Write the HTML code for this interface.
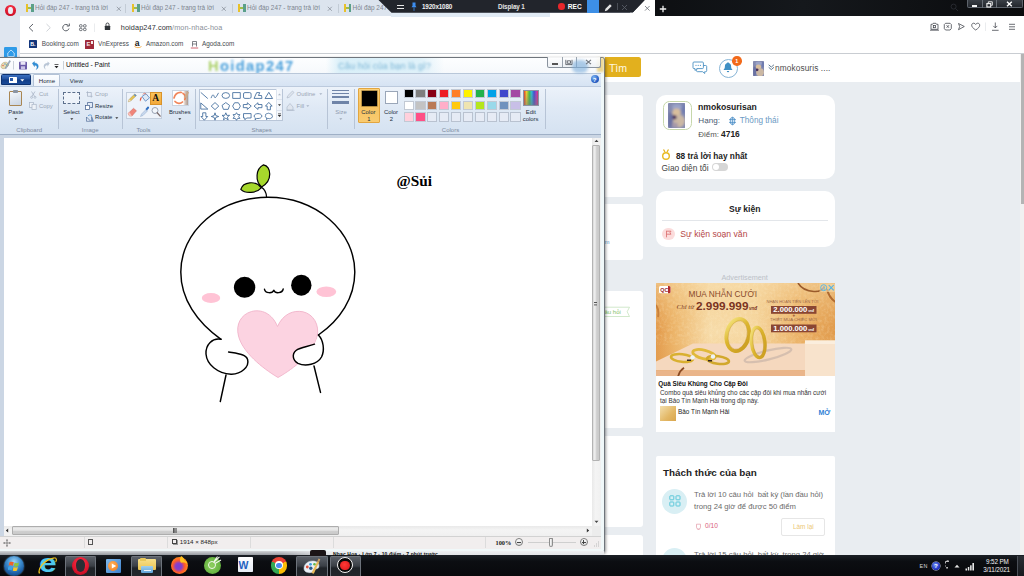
<!DOCTYPE html>
<html lang="vi">
<head>
<meta charset="utf-8">
<title>Hỏi đáp 247 - trang trả lời</title>
<style>
html,body{margin:0;padding:0;}
body{width:1024px;height:576px;overflow:hidden;position:relative;background:#e9edf1;font-family:"Liberation Sans",sans-serif;color:#222;}
.a{position:absolute;}
.t{position:absolute;white-space:nowrap;line-height:1;transform:translateY(-41%);}
.b{font-weight:bold;}
/* ---------- browser chrome ---------- */
#tabbar{left:0;top:0;width:1024px;height:16.3px;background:#dce4ee;}
#sidebar{left:0;top:16px;width:20px;height:41px;background:#dfe6f0;}
#addr{left:20px;top:16px;width:1004px;height:37px;background:#fff;}
#chromeline{left:20px;top:53px;width:1004px;height:1px;background:#c9cdd2;}
#blackbar{left:654.5px;top:0;width:370px;height:16px;background:linear-gradient(90deg,#0d0f12 0%,#15181c 40%,#0a0b0d 100%);}
.tab{font-size:6.420px;color:#7d858e;}
.bm{font-size:6.4px;color:#474b50;}
/* ---------- page ---------- */
#pagehead{left:0;top:54px;width:1020px;height:27.5px;background:#fff;}
.card{position:absolute;background:#fff;}

/* ---------- paint ---------- */
#pw{left:0;top:56.5px;width:605px;height:496px;box-sizing:border-box;border:1px solid #6f757c;border-left:none;border-radius:0 3px 3px 0;background:rgba(240,249,250,0.92);box-shadow:1px 1px 3px rgba(0,0,0,0.40);}
#ptitle{left:0;top:57.5px;width:603px;height:15px;background:linear-gradient(180deg,#fdfeff 0%,#f6f9fc 100%);}
#ptabs{left:0;top:72.5px;width:600.5px;height:13px;background:linear-gradient(180deg,#e3ecf7,#d6e3f3);border-top:0.6px solid #b9c7d9;box-sizing:border-box;}
#pribbon{left:0;top:85.5px;width:600.5px;height:49px;background:linear-gradient(180deg,#ecf2fa 0%,#dfe9f5 45%,#d5e2f1 100%);border-top:0.6px solid #bccadd;border-bottom:0.8px solid #9fb0c6;box-sizing:border-box;}
.rl{font-size:5.9px;color:#24303f;}
.rd{font-size:5.9px;color:#9aa6b5;}
.rg{font-size:6px;color:#7d8a9e;}
.rsep{position:absolute;top:89px;width:0.7px;height:40px;background:#b7c4d6;}
#pwork{left:0;top:134.5px;width:600.5px;height:401px;background:#cbd6e4;}
#pcanvas{left:4px;top:137.5px;width:588px;height:388.5px;background:#fff;}
#pstatus{left:0;top:535.5px;width:600.5px;height:13.5px;background:#f1eeee;border-top:0.6px solid #d2d2d2;box-sizing:border-box;}
.ssep{position:absolute;top:537px;width:0.6px;height:11px;background:#dcdcdc;}
.st{font-size:6.2px;color:#222;}
/* ---------- taskbar ---------- */
#taskbar{left:0;top:555px;width:1024px;height:21px;background:linear-gradient(180deg,#1b2026 0%,#0c0e12 30%,#08090c 100%);}
</style>
</head>
<body>

<!-- ================= PAGE (behind) ================= -->
<div class="a" id="pagehead"></div>
<div class="a" id="page">
  <!-- left column cards -->
  <div class="card" style="left:604px;top:95px;width:38.5px;height:102px;border-radius:0 3px 3px 0"></div>
  <div class="card" style="left:604px;top:204px;width:38.5px;height:55.5px;border-radius:0 3px 3px 0"></div>
  <div class="card" style="left:604px;top:291px;width:38.5px;height:137px;border-radius:0 3px 3px 0"></div>
  <div class="card" style="left:604px;top:436px;width:38.5px;height:91px;border-radius:0 3px 3px 0"></div>
  <div class="card" style="left:604px;top:535px;width:38.5px;height:30px;border-radius:0 3px 0 0"></div>

  <!-- header items -->
  <div class="a" style="left:604.5px;top:57.3px;width:36px;height:20.2px;background:#e2b01e;border-radius:0 2.5px 2.5px 0"></div>
  <div class="t" style="left:609px;top:67.3px;font-size:10.6px;color:#fff8e0;letter-spacing:-0.1px">Tìm</div>
  <!-- chat icon -->
  <svg class="a" style="left:692px;top:60px" width="16" height="15" viewBox="0 0 16 15">
    <path d="M5.5 5.5h8.2a1 1 0 0 1 1 1v4.2a1 1 0 0 1-1 1h-1v1.8l-2-1.8H5.5a1 1 0 0 1-1-1z" fill="#fff" stroke="#4a90c2" stroke-width="0.9"/>
    <path d="M2 2h8.4a1 1 0 0 1 1 1v4.6a1 1 0 0 1-1 1H5l-2 1.9V8.6H2a1 1 0 0 1-1-1V3a1 1 0 0 1 1-1z" fill="#fff" stroke="#4a90c2" stroke-width="0.9"/>
    <circle cx="4" cy="5.3" r="0.6" fill="#4a90c2"/><circle cx="6.2" cy="5.3" r="0.6" fill="#4a90c2"/><circle cx="8.4" cy="5.3" r="0.6" fill="#4a90c2"/>
  </svg>
  <!-- bell -->
  <div class="a" style="left:718.5px;top:58.5px;width:17px;height:17px;border:0.7px solid #86b4d6;border-radius:50%;background:#fff"></div>
  <svg class="a" style="left:722px;top:61px" width="12" height="13" viewBox="0 0 12 13">
    <path d="M6 1.2c.5 0 .8.3.8.8 1.500.4 2.300 1.600 2.300 3.200 0 2 .6 2.700 1.200 3.300v.6H1.700v-.6c.6-.6 1.200-1.300 1.200-3.300 0-1.600.8-2.800 2.300-3.200 0-.5.300-.8.800-.8z" fill="#3f8fc4"/>
    <path d="M4.800 10h2.400a1.200 1.200 0 0 1-2.400 0z" fill="#3f8fc4"/>
  </svg>
  <div class="a" style="left:732px;top:56.3px;width:9.6px;height:9.6px;border-radius:50%;background:#f26a1b"></div>
  <div class="t b" style="left:735.3px;top:61.3px;font-size:5.5px;color:#fff">1</div>
  <!-- small avatar -->
  <svg class="a" style="left:752.500px;top:60.500px" width="11" height="15.500" viewBox="0 0 17.200 25" preserveAspectRatio="none"><g clip-path="url(#avc)"><rect width="17.200" height="25" fill="#858bb0"/><g filter="url(#avb)"><ellipse cx="9" cy="4" rx="5" ry="3" fill="#9aa3c8"/><ellipse cx="8.500" cy="9.500" rx="4.200" ry="4" fill="#d9be9c"/><ellipse cx="11" cy="18" rx="6" ry="6.500" fill="#cbb8a4"/><ellipse cx="6.300" cy="14.300" rx="2.300" ry="2.200" fill="#4a2f5a"/><ellipse cx="2.500" cy="17" rx="2.300" ry="8" fill="#6a72a3"/><ellipse cx="15.500" cy="6" rx="1.800" ry="5" fill="#6f7cb0"/></g></g></svg>
  <svg class="a" style="left:768.300px;top:64.300px" width="6.600" height="6.600" viewBox="0 0 6 6"><path d="M0.600 0.700l2.400 2.100 2.400-2.100M0.600 3l2.400 2.100 2.400-2.100" fill="none" stroke="#5d7890" stroke-width="0.900"/></svg>
  <div class="t" style="left:775px;top:67.3px;font-size:8.3px;color:#4d4d4d;letter-spacing:0.1px">nmokosuris ....</div>

  <!-- profile card -->
  <div class="card" style="left:655.5px;top:94.5px;width:179.5px;height:84.3px;border-radius:10px"></div>
  <div class="a" style="left:662.500px;top:101.200px;width:29.300px;height:29.200px;border:0.700px solid #c6d7aa;border-radius:6.500px;box-sizing:border-box;background:#fff"></div>
  <svg class="a" style="left:668px;top:103px" width="17.200" height="25" viewBox="0 0 17.200 25"><defs><filter id="avb" x="-20%" y="-20%" width="140%" height="140%"><feGaussianBlur stdDeviation="1.100"/></filter><clipPath id="avc"><rect width="17.200" height="25" rx="1"/></clipPath></defs><g clip-path="url(#avc)"><rect width="17.200" height="25" fill="#858bb0"/><g filter="url(#avb)"><ellipse cx="9" cy="4" rx="5" ry="3" fill="#9aa3c8"/><ellipse cx="8.500" cy="9.500" rx="4.200" ry="4" fill="#d9be9c"/><ellipse cx="11" cy="18" rx="6" ry="6.500" fill="#cbb8a4"/><ellipse cx="6.300" cy="14.300" rx="2.300" ry="2.200" fill="#4a2f5a"/><ellipse cx="2.500" cy="17" rx="2.300" ry="8" fill="#6a72a3"/><ellipse cx="15.500" cy="6" rx="1.800" ry="5" fill="#6f7cb0"/><ellipse cx="7" cy="22" rx="3" ry="2.500" fill="#a89aa8"/></g></g></svg>
  <div class="t b" style="left:698px;top:107.3px;font-size:8.6px;color:#222">nmokosurisan</div>
  <div class="t" style="left:698.300px;top:120.300px;font-size:8.100px;color:#4a5a72">Hạng:</div>
  <svg class="a" style="left:728px;top:116px" width="9" height="10" viewBox="0 0 9 10"><ellipse cx="4.500" cy="5" rx="2.300" ry="3.800" fill="#cfe3f4" stroke="#4f8fc6" stroke-width="0.800"/><path d="M1 3.500h7M1 6.500h7M4.500 1v8" stroke="#4f8fc6" stroke-width="0.700" fill="none"/></svg>
  <div class="t" style="left:739.800px;top:120.300px;font-size:8.200px;color:#6b9ac4">Thông thái</div>
  <div class="t" style="left:698.300px;top:134.300px;font-size:7.900px;color:#555">Điểm: <span class="b" style="color:#222;font-size:8.400px">4716</span></div>
  <svg class="a" style="left:661px;top:149px" width="10" height="12" viewBox="0 0 10 12"><path d="M2.500 0.500l1.500 2.500M7.500 0.500l-1.500 2.500" stroke="#e4b21c" stroke-width="1.300" fill="none"/><circle cx="5" cy="7" r="3.300" fill="none" stroke="#e8b91e" stroke-width="1.400"/></svg>
  <div class="t b" style="left:676px;top:155px;font-size:8.3px;color:#222">88 trả lời hay nhất</div>
  <div class="t" style="left:661.5px;top:167px;font-size:8.400px;color:#444">Giao diện tối</div>
  <div class="a" style="left:712px;top:162.8px;width:15.5px;height:8px;border-radius:4px;background:#d6d6d6"></div>
  <div class="a" style="left:712.8px;top:163.5px;width:6.6px;height:6.6px;border-radius:50%;background:#fff"></div>

  <!-- event card -->
  <div class="card" style="left:655.5px;top:191.3px;width:179.5px;height:55.7px;border-radius:10px"></div>
  <div class="t b" style="left:729px;top:209px;font-size:8.6px;color:#222">Sự kiện</div>
  <div class="a" style="left:662px;top:220px;width:166px;height:0.7px;background:#e3e6ea"></div>
  <div class="a" style="left:662px;top:227.5px;width:12.5px;height:12.5px;border-radius:50%;background:#fbdcdc"></div>
  <svg class="a" style="left:664.5px;top:230px" width="8" height="8" viewBox="0 0 8 8"><path d="M1.500 0.800v6.500M1.500 1.200h4.500l-1 1.500 1 1.500h-4.500" fill="none" stroke="#d96a6a" stroke-width="0.800"/></svg>
  <div class="t" style="left:680.3px;top:234px;font-size:8.650px;color:#b54848">Sự kiện soạn văn</div>

  <!-- advertisement -->
  <div class="t" style="left:721.5px;top:276.8px;font-size:7.250px;color:#bcc1c7">Advertisement</div>
  <div class="card" style="left:655.5px;top:282.5px;width:179.5px;height:149.3px"></div>
  <div class="a" id="adimg" style="left:655.500px;top:282.500px;width:179.500px;height:93.800px;overflow:hidden;background:#efc078">
<svg class="a" style="left:0;top:0" width="179.500" height="93.800" viewBox="0 0 179.500 93.800">
  <defs>
    <linearGradient id="adbg" x1="0" y1="0" x2="1" y2="0"><stop offset="0" stop-color="#e2994a"/><stop offset="0.100" stop-color="#ecb469"/><stop offset="0.300" stop-color="#f7dcaa"/><stop offset="0.550" stop-color="#f6d8a2"/><stop offset="0.800" stop-color="#ebb166"/><stop offset="1" stop-color="#e09a4c"/></linearGradient>
    <linearGradient id="adbg2" x1="0" y1="0" x2="0" y2="1"><stop offset="0" stop-color="#f6d9a5" stop-opacity="0.550"/><stop offset="0.500" stop-color="#f0c27a" stop-opacity="0"/><stop offset="1" stop-color="#e0954a" stop-opacity="0.350"/></linearGradient>
    <linearGradient id="gold" x1="0" y1="0" x2="1" y2="1"><stop offset="0" stop-color="#f7e886"/><stop offset="0.450" stop-color="#dcb52e"/><stop offset="1" stop-color="#c99a1e"/></linearGradient>
    <filter id="spk" x="0" y="0" width="100%" height="100%"><feTurbulence type="fractalNoise" baseFrequency="0.350" numOctaves="2" seed="4"/><feColorMatrix type="matrix" values="0 0 0 0 1  0 0 0 0 0.920  0 0 0 0 0.700  0.900 0 0 0 -0.380"/></filter>
  </defs>
  <rect width="179.500" height="93.800" fill="url(#adbg)"/>
  <rect width="179.500" height="93.800" fill="url(#adbg2)"/>
  <rect width="179.500" height="62" filter="url(#spk)" opacity="0.550"/>
  <!-- platform -->
  <path d="M0 78.500L37 60.500H149V87.300H0z" fill="#f5d8be"/>
  <path d="M0 87.300V93.800H149V87.300z" fill="#eab58a"/>
  
  <path d="M149 57.500h30.500V93.800H149z" fill="#f8e3cc"/>
  <path d="M149 57.500h30.500v3.500H149z" fill="#fbeedd"/>
  <!-- ribbons -->
  <path d="M142 0c3 5 8 8 16 8.500 6 .3 9-2 10-5" fill="none" stroke="#9a5a2a" stroke-width="1.600"/>
  <path d="M171 6c1 5 4 10 8.500 13" fill="none" stroke="#b06a30" stroke-width="2"/>
  <path d="M22 93.800c1-4 3-7 6-9" fill="none" stroke="#8a4a22" stroke-width="1.800"/>
  <path d="M0 22c2 3 3 7 2 12" fill="none" stroke="#c9803a" stroke-width="2"/>
  <!-- ring shadow -->
  <ellipse cx="112" cy="72" rx="24" ry="4.500" fill="none" stroke="#c9b5a8" stroke-width="2.200" opacity="0.700" transform="rotate(-14 112 72)"/>
  <!-- big rings -->
  <ellipse cx="81.700" cy="52" rx="11.200" ry="16.300" fill="none" stroke="url(#gold)" stroke-width="3.600" transform="rotate(12 81.700 52)"/>
  <ellipse cx="81.700" cy="52" rx="9.300" ry="14.500" fill="none" stroke="#b98a18" stroke-width="0.500" transform="rotate(12 81.700 52)" opacity="0.700"/>
  <ellipse cx="102.200" cy="59.500" rx="6.800" ry="15.300" fill="none" stroke="url(#gold)" stroke-width="3.200" transform="rotate(-6 102.200 59.500)"/>
  <ellipse cx="102.200" cy="59.500" rx="5.200" ry="13.700" fill="none" stroke="#b98a18" stroke-width="0.500" transform="rotate(-6 102.200 59.500)" opacity="0.700"/>
  <!-- small rings -->
  <ellipse cx="26" cy="75" rx="11" ry="3.800" fill="none" stroke="#d9b030" stroke-width="2.600" transform="rotate(6 26 75)"/>
  <ellipse cx="48" cy="71.500" rx="11.500" ry="4.300" fill="none" stroke="#e0b93a" stroke-width="2.800" transform="rotate(14 48 71.500)"/>
  <ellipse cx="62" cy="77" rx="11" ry="3.800" fill="none" stroke="#d2a82c" stroke-width="2.600" transform="rotate(8 62 77)"/>
  <circle cx="36.500" cy="74.500" r="2.300" fill="#eef4f8"/><circle cx="57" cy="73.500" r="2.200" fill="#eef4f8"/>
  <rect x="31" y="76.500" width="4" height="1.500" fill="#3a2a22"/><rect x="52" y="77" width="4" height="1.500" fill="#3a2a22"/>
  <!-- QC badge -->
  <rect x="3" y="3" width="11.500" height="7.300" rx="1.500" fill="#fff"/><path d="M12 3h1a1.500 1.500 0 0 1 1.500 1.500v4.300a1.500 1.500 0 0 1-1.500 1.500h-1z" fill="#b22a2a"/>
  <text x="4.300" y="8.800" font-family="'Liberation Sans',sans-serif" font-size="5.400" font-weight="bold" fill="#9a2a2a">QC</text>
  <!-- adchoices -->
  <rect x="163.500" y="0.500" width="15.500" height="8.500" fill="#f3d9a8" opacity="0.600"/>
  <circle cx="167.700" cy="4.700" r="3" fill="none" stroke="#4fb3e8" stroke-width="0.900"/><text x="166.900" y="6.600" font-family="'Liberation Sans',sans-serif" font-size="5" font-weight="bold" fill="#4fb3e8">i</text>
  <path d="M172.700 2l5 5.400M177.700 2l-5 5.400" stroke="#4fb3e8" stroke-width="1.100"/>
  <!-- headline -->
  <text x="32.500" y="14" font-family="'Liberation Sans',sans-serif" font-size="9.400" fill="#8a4a2a" textLength="68.500" lengthAdjust="spacingAndGlyphs">MUA NHẪN CƯỚI</text>
  <text x="20.500" y="26.300" font-family="'Liberation Serif',serif" font-style="italic" font-size="7" fill="#7a3a22">Chỉ từ</text>
  <text x="40" y="26.600" font-family="'Liberation Sans',sans-serif" font-weight="bold" font-size="11.800" fill="#7a3422" textLength="52.500" lengthAdjust="spacingAndGlyphs">2.999.999</text>
  <text x="93" y="26.600" font-family="'Liberation Sans',sans-serif" font-style="italic" font-weight="bold" font-size="4.600" fill="#7a3422">vnđ</text>
  <text x="110.500" y="20.300" font-family="'Liberation Sans',sans-serif" font-size="4.400" fill="#a06a48" textLength="52" lengthAdjust="spacingAndGlyphs">NHẬN HOÀN TIỀN LÊN TỚI</text>
  <rect x="115" y="23" width="45.500" height="7.800" fill="#8a4632"/>
  <text x="117.300" y="29.400" font-family="'Liberation Sans',sans-serif" font-weight="bold" font-size="6.900" fill="#fff" textLength="34" lengthAdjust="spacingAndGlyphs">2.000.000</text>
  <text x="152.300" y="29.300" font-family="'Liberation Sans',sans-serif" font-weight="bold" font-size="3.300" fill="#fff">vnđ</text>
  <text x="136.500" y="33.800" font-family="'Liberation Sans',sans-serif" font-weight="bold" font-size="4.500" fill="#8a4632">+</text>
  <text x="114" y="38.500" font-family="'Liberation Sans',sans-serif" font-size="4.400" fill="#a06a48" textLength="47" lengthAdjust="spacingAndGlyphs">THIẾT MUA CHIẾC MỚI</text>
  <rect x="115" y="41.500" width="45.500" height="7.800" fill="#8a4632"/>
  <text x="117.300" y="47.900" font-family="'Liberation Sans',sans-serif" font-weight="bold" font-size="6.900" fill="#fff" textLength="34" lengthAdjust="spacingAndGlyphs">1.000.000</text>
  <text x="152.300" y="47.800" font-family="'Liberation Sans',sans-serif" font-weight="bold" font-size="3.300" fill="#fff">vnđ</text>
</svg>
</div>
  <div class="t b" style="left:658.3px;top:383.8px;font-size:6.370px;color:#111">Quà Siêu Khủng Cho Cặp Đôi</div>
  <div class="t" style="left:660px;top:392.8px;font-size:6.370px;color:#333">Combo quà siêu khủng cho các cặp đôi khi mua nhẫn cưới</div>
  <div class="t" style="left:660px;top:401.3px;font-size:6.320px;color:#333">tại Bảo Tín Mạnh Hải trong dịp này.</div>
  <div class="a" style="left:660px;top:405.5px;width:15.5px;height:15.5px;background:linear-gradient(135deg,#f3dfae,#e3b866 60%,#d9a64e)"></div>
  <div class="t" style="left:678px;top:411.8px;font-size:6.4px;color:#222">Bảo Tín Mạnh Hải</div>
  <div class="t b" style="left:818.5px;top:412.3px;font-size:7px;color:#2f7fd6">MỞ</div>

  <!-- challenge card -->
  <div class="card" style="left:655.5px;top:455.5px;width:179.5px;height:110px;border-radius:2px 2px 0 0"></div>
  <div class="t b" style="left:663px;top:472.3px;font-size:9.900px;color:#222">Thách thức của bạn</div>
  <div class="a" style="left:662px;top:488.5px;width:25px;height:25px;border-radius:50%;background:#d9eff4"></div>
  <svg class="a" style="left:668.5px;top:495px" width="12" height="12" viewBox="0 0 12 12"><g fill="none" stroke="#4dc3d6" stroke-width="0.900"><rect x="0.800" y="0.800" width="4" height="4" rx="0.600"/><rect x="7" y="0.800" width="4" height="4" rx="0.600"/><rect x="0.800" y="7" width="4" height="4" rx="0.600"/><rect x="7" y="7" width="4" height="4" rx="0.600"/></g></svg>
  <div class="t" style="left:694px;top:494.3px;font-size:7.700px;color:#6a6a6a">Trả lời 10 câu hỏi&nbsp; bất kỳ (lần đầu hỏi)</div>
  <div class="t" style="left:694px;top:506.3px;font-size:7.700px;color:#6a6a6a">trong 24 giờ để được 50 điểm</div>
  <svg class="a" style="left:694.5px;top:522.5px" width="7" height="7" viewBox="0 0 7 7"><path d="M1.500 1.200h4v3a2 2 0 0 1-4 0zM2.500 6.300h2" fill="none" stroke="#e39aa8" stroke-width="0.700"/></svg>
  <div class="t" style="left:705px;top:526px;font-size:6.6px;color:#d9607a">0/10</div>
  <div class="a" style="left:781px;top:518px;width:44px;height:17.5px;border:0.7px solid #e6e6e6;border-radius:2px;box-sizing:border-box;background:#fff"></div>
  <div class="t" style="left:793px;top:527px;font-size:6.4px;color:#ecc978">Làm lại</div>
  <div class="a" style="left:662px;top:547.5px;width:25px;height:25px;border-radius:50%;background:#d9eff4"></div>
  <div class="t" style="left:694px;top:553.5px;font-size:7.700px;color:#6a6a6a">Trả lời 15 câu hỏi&nbsp; bất kỳ&nbsp; trong 24 giờ</div>

  <!-- left column small bits -->
  <div class="t" style="left:604.5px;top:240.5px;font-size:6px;color:#5b97c9">m</div>
  <div class="t" style="left:604.5px;top:311.3px;font-size:6px;color:#7fbf6a">âu hỏi</div>
  <svg class="a" style="left:603px;top:305.5px" width="30" height="12" viewBox="0 0 30 12"><path d="M0 1.200h26.500l-2.300 4.500 2.300 4.800H0" fill="none" stroke="#bfe0b5" stroke-width="0.700"/></svg>

  <!-- page scrollbar -->
  <div class="a" style="left:1020px;top:54px;width:4px;height:501px;background:#f1f1f1"></div>
  <div class="a" style="left:1020.5px;top:54px;width:3.5px;height:150px;background:#b4b4b4"></div>
</div>

<!-- ================= BROWSER CHROME ================= -->
<div class="a" id="tabbar"></div>
<div class="a" id="sidebar"></div>
<div class="a" id="addr"></div>
<div class="a" id="chromeline"></div>
<div class="a" id="blackbar"></div>
<!-- opera logo -->
<div class="a" style="left:5.300px;top:5px;width:10.600px;height:10.600px;border-radius:50%;background:radial-gradient(circle at 50% 30%,#ff3b4e,#d3122a 70%,#a80d20)"></div>
<div class="a" style="left:8.300px;top:6.500px;width:4.600px;height:7.600px;border-radius:50%;background:#e9eef5"></div>
<div class="a" style="left:26.0px;top:4px;width:2.400px;height:8px;background:#e8c12a"></div><div class="a" style="left:28.4px;top:7px;width:3px;height:2.200px;background:#9fbf4a"></div><div class="a" style="left:31.2px;top:4px;width:2.400px;height:8px;background:#5aa08a"></div><div class="t tab" style="left:35.0px;top:8.300px">Hỏi đáp 247 - trang trả lời</div><svg class="a" style="left:115.5px;top:5.500px" width="6" height="6" viewBox="0 0 6 6"><path d="M0.800 0.800l4 4M4.800 0.800l-4 4" stroke="#7f8790" stroke-width="0.700" fill="none"/></svg><div class="a" style="left:125.3px;top:3.500px;width:0.600px;height:9.500px;background:#c3ccd6"></div><div class="a" style="left:132.0px;top:4px;width:2.400px;height:8px;background:#e8c12a"></div><div class="a" style="left:134.4px;top:7px;width:3px;height:2.200px;background:#9fbf4a"></div><div class="a" style="left:137.2px;top:4px;width:2.400px;height:8px;background:#5aa08a"></div><div class="t tab" style="left:141.0px;top:8.300px">Hỏi đáp 247 - trang trả lời</div><svg class="a" style="left:221.3px;top:5.500px" width="6" height="6" viewBox="0 0 6 6"><path d="M0.800 0.800l4 4M4.800 0.800l-4 4" stroke="#7f8790" stroke-width="0.700" fill="none"/></svg><div class="a" style="left:232.0px;top:3.500px;width:0.600px;height:9.500px;background:#c3ccd6"></div><div class="a" style="left:238.0px;top:4px;width:2.400px;height:8px;background:#e8c12a"></div><div class="a" style="left:240.4px;top:7px;width:3px;height:2.200px;background:#9fbf4a"></div><div class="a" style="left:243.2px;top:4px;width:2.400px;height:8px;background:#5aa08a"></div><div class="t tab" style="left:247.0px;top:8.300px">Hỏi đáp 247 - trang trả lời</div><svg class="a" style="left:327.3px;top:5.500px" width="6" height="6" viewBox="0 0 6 6"><path d="M0.800 0.800l4 4M4.800 0.800l-4 4" stroke="#7f8790" stroke-width="0.700" fill="none"/></svg><div class="a" style="left:337.5px;top:3.500px;width:0.600px;height:9.500px;background:#c3ccd6"></div><div class="a" style="left:343.5px;top:4px;width:2.400px;height:8px;background:#e8c12a"></div><div class="a" style="left:345.9px;top:7px;width:3px;height:2.200px;background:#9fbf4a"></div><div class="a" style="left:348.7px;top:4px;width:2.400px;height:8px;background:#5aa08a"></div><div class="t tab" style="left:352.5px;top:8.300px">Hỏi đáp 247 - trang trả lời</div><div class="a" style="left:550px;top:12.500px;width:105px;height:4.500px;background:#fff"></div>
<div class="a" style="left:391px;top:12.500px;width:159px;height:4px;background:#e1ebf5"></div>
<!-- recorder bar -->
<svg class="a" style="left:378px;top:0" width="280" height="13" viewBox="0 0 280 13"><path d="M0.500 0H267.500L255 12.800H13.500z" fill="#22252c"/><path d="M267.500 0H277V17H251z" fill="#fff"/></svg>
<div class="a" style="left:630px;top:0;width:25px;height:16.500px;background:#fff;clip-path:polygon(15px 0,100% 0,100% 100%,0 100%,0 12.800px,3px 12.800px)"></div>
<div class="a" style="left:397.300px;top:5.200px;width:6.600px;height:0.900px;background:#e8e8e8"></div>
<div class="a" style="left:397.300px;top:7.800px;width:6.600px;height:0.900px;background:#e8e8e8"></div>
<svg class="a" style="left:410.500px;top:2px" width="6" height="10" viewBox="0 0 6 10"><path d="M1.500 0.500h3v3.300l1 1.500H0.500l1-1.500z" fill="#3d8ef0"/><path d="M3 5.300v3.500" stroke="#3d8ef0" stroke-width="0.800"/></svg>
<div class="t b" style="left:422px;top:6.600px;font-size:6.300px;color:#f2f2f2;letter-spacing:-0.150px">1920x1080</div>
<div class="t b" style="left:498px;top:6.600px;font-size:6.300px;color:#e6e6e6;letter-spacing:-0.100px">Display 1</div>
<div class="a" style="left:558.200px;top:3.200px;width:6.600px;height:6.600px;border-radius:50%;background:#e8262b"></div>
<div class="t b" style="left:567.800px;top:6.700px;font-size:6.600px;color:#fff">REC</div>
<div class="a" style="left:587px;top:0;width:12px;height:12.800px;background:#3d8fe6"></div>
<svg class="a" style="left:603.500px;top:2.500px" width="9" height="9" viewBox="0 0 9 9"><path d="M0.800 8.200l.7-2.400L6 1.300l1.700 1.700-4.500 4.500z" fill="#e4e4e4"/></svg>
<div class="a" style="left:616.500px;top:3px;width:0.500px;height:7px;background:#4a4e56"></div>
<svg class="a" style="left:621px;top:3.500px" width="7" height="7" viewBox="0 0 7 7"><path d="M1 1l5 5M6 1l-5 5" stroke="#5d626b" stroke-width="0.800" fill="none"/></svg>
<svg class="a" style="left:643.500px;top:5px" width="7" height="7" viewBox="0 0 7 7"><path d="M1 1l4.600 4.600M5.600 1L1 5.600" stroke="#6a6f76" stroke-width="0.800" fill="none"/></svg>
<svg class="a" style="left:659px;top:4.500px" width="8" height="8" viewBox="0 0 8 8"><path d="M4 0.800v6.400M0.800 4h6.400" stroke="#f2f2f2" stroke-width="1.300" fill="none"/></svg>
<!-- window controls -->
<div class="a" style="left:967px;top:0;width:55.500px;height:8.300px;box-sizing:border-box;border:0.600px solid #5d636b;border-top:none;border-radius:0 0 2px 2px;background:linear-gradient(180deg,#3a3f46,#23272d)"></div>
<div class="a" style="left:981.500px;top:0;width:0.600px;height:8px;background:#6a7078"></div>
<div class="a" style="left:996.300px;top:0;width:0.600px;height:8px;background:#6a7078"></div>
<div class="a" style="left:972px;top:5px;width:5px;height:1.500px;background:#f4f4f4"></div>
<svg class="a" style="left:985.500px;top:0.800px" width="7" height="7" viewBox="0 0 7 7"><path d="M2.300 2V0.800h4v3.500H5.200" fill="none" stroke="#f4f4f4" stroke-width="0.900"/><rect x="0.900" y="2.600" width="3.800" height="3.400" fill="none" stroke="#f4f4f4" stroke-width="1.100"/></svg>
<svg class="a" style="left:1005.500px;top:0.800px" width="7" height="6" viewBox="0 0 7 6"><path d="M1 0.800l4.800 4.400M5.800 0.800L1 5.200" stroke="#fff" stroke-width="1.400" fill="none"/></svg>
<svg class="a" style="left:950px;top:3px" width="9" height="9" viewBox="0 0 9 9"><circle cx="3.600" cy="3.600" r="2.500" fill="none" stroke="#2a2d33" stroke-width="0.900"/><path d="M5.500 5.500l2.500 2.500" stroke="#2a2d33" stroke-width="0.900"/></svg>
<!-- address bar -->
<svg class="a" style="left:26px;top:21.500px" width="74" height="12" viewBox="0 0 74 12">
  <path d="M7 2L3.200 5.700 7 9.400" fill="none" stroke="#4a4f57" stroke-width="0.900"/>
  <path d="M20.500 2l3.800 3.700L20.500 9.400" fill="none" stroke="#c9cdd3" stroke-width="0.900"/>
  <path d="M42.300 3.500A3.200 3.200 0 1 0 43 6.500" fill="none" stroke="#4a4f57" stroke-width="0.900"/><path d="M43.300 1.500v2.500h-2.500" fill="none" stroke="#4a4f57" stroke-width="0.900"/>
  <g fill="none" stroke="#4a4f57" stroke-width="0.800"><rect x="53.500" y="2.700" width="2.600" height="2.300" rx="0.800"/><rect x="57.500" y="2.700" width="2.600" height="2.300" rx="0.800"/><rect x="53.500" y="6.300" width="2.600" height="2.300" rx="0.800"/><rect x="57.500" y="6.300" width="2.600" height="2.300" rx="0.800"/></g>
  <rect x="68" y="1.500" width="0.500" height="8.500" fill="#d5d8dc"/>
</svg>
<svg class="a" style="left:104px;top:21.800px" width="7" height="9" viewBox="0 0 7 9"><rect x="0.800" y="3.800" width="5.400" height="4.200" rx="0.500" fill="#2f3338"/><path d="M2 3.800V2.500a1.500 1.500 0 0 1 3 0v1.300" fill="none" stroke="#2f3338" stroke-width="0.900"/></svg>
<div class="t" style="left:120.800px;top:26.700px;font-size:7.300px;color:#2e3136;letter-spacing:0.100px">hoidap247.com<span style="color:#8a9098">/mon-nhac-hoa</span></div>
<!-- toolbar right icons -->
<svg class="a" style="left:928px;top:20px" width="94" height="14" viewBox="0 0 94 14">
  <g fill="none" stroke="#3a3e45" stroke-width="0.750">
    <path d="M3 4.300h1.500l.6-1h2.800l.6 1H10v5H3z"/><rect x="5.300" y="5.500" width="2.200" height="2.200"/><path d="M2 10.200h9"/>
    <path d="M17.500 3.300h4.600l1.200 1.200v4l-1.200 1.500h-4.600l-1.200-1.500v-4z"/><path d="M18.600 5.200l2.400 2.600M21 5.200l-2.400 2.600"/>
    <path d="M30.500 3.500l5.800 3-5.800 3.200 1.200-3.200z"/>
    <path d="M47.700 10c-3-2-4-3.300-4-4.800 0-1.200.9-2 2-2 .9 0 1.600.5 2 1.300.4-.8 1.100-1.300 2-1.300 1.100 0 2 .8 2 2 0 1.500-1 2.800-4 4.800z"/>
    <path d="M67.300 2.500v5.300M65.300 5.900l2 2 2-2M64 10.300h6.600"/>
    <path d="M81 4.300h6M81 6.800h6M81 9.300h6"/>
  </g>
  <rect x="57.300" y="2.500" width="0.500" height="8.500" fill="#d5d8dc"/>
</svg>
<!-- bookmarks bar -->
<div class="a" style="left:28.800px;top:40px;width:8.300px;height:8.300px;background:#12357a;border-radius:0.600px"></div>
<div class="t b" style="left:30.300px;top:44.300px;font-size:5.300px;color:#fff">B.</div>
<div class="t bm" style="left:41.800px;top:44.300px">Booking.com</div>
<div class="a" style="left:85px;top:40px;width:9px;height:8.500px;background:#9f2a3a;border-radius:0.600px"></div>
<div class="t b" style="left:86.600px;top:44.400px;font-size:5.800px;color:#f5e9ea">E</div>
<div class="a" style="left:90.500px;top:41.300px;width:2.300px;height:2.300px;background:#f5e9ea"></div>
<div class="t bm" style="left:98px;top:44.300px">VnExpress</div>
<div class="t b" style="left:134.800px;top:43.300px;font-size:8.600px;color:#1a1a1a">a</div>
<svg class="a" style="left:133.500px;top:46.300px" width="8" height="3" viewBox="0 0 8 3"><path d="M0.500 0.500c2 1.500 5 1.500 7 0" fill="none" stroke="#f0a030" stroke-width="0.800"/></svg>
<div class="t bm" style="left:146px;top:44.300px">Amazon.com</div>
<svg class="a" style="left:189.500px;top:40px" width="9" height="9" viewBox="0 0 9 9"><path d="M2.500 6.500V1.500h4v5M2.500 4h4" fill="none" stroke="#4a4f57" stroke-width="0.700"/><path d="M0.800 8h7.400" stroke="#c23a4a" stroke-width="0.800"/></svg>
<div class="t bm" style="left:202px;top:44.300px">Agoda.com</div>
<!-- home button -->
<div class="a" style="left:4px;top:47px;width:13px;height:10px;background:#2f9be8;border-radius:1.200px 1.200px 0 0"></div>
<svg class="a" style="left:6.500px;top:48.500px" width="8" height="8" viewBox="0 0 8 8"><path d="M0.800 4L4 1l3.200 3v3.500H0.800z" fill="none" stroke="#d9eefc" stroke-width="0.800"/></svg>


<!-- ================= PAINT WINDOW ================= -->
<div class="a" id="pw"></div>
<!-- blurred page content seen through glass title bar -->
<div class="a" id="ptitle"></div>
<div class="a" style="left:326px;top:58px;width:118px;height:14.500px;background:linear-gradient(90deg,rgba(214,238,248,0) 0%,rgba(214,238,248,0.900) 12%,rgba(220,240,249,0.900) 80%,rgba(214,238,248,0) 100%)"></div>
<div class="t b" style="left:208px;top:65.300px;font-size:14.700px;color:#3f9ad9;filter:blur(1.150px);letter-spacing:1.350px;opacity:0.950"><span style="color:#a8cf62">H</span>oidap247</div>
<div class="t" style="left:338px;top:66.300px;font-size:9.300px;color:#7db6d6;filter:blur(0.800px);">Câu hỏi của bạn là gì?</div>
<div class="t" style="left:66px;top:65px;font-size:6.7px;color:#111">Untitled - Paint</div>
<div class="a" id="ptabs"></div>
<div class="a" id="pribbon"></div>
<div class="a" id="pwork"></div>
<div class="a" id="pcanvas"></div>
<div class="a" id="pstatus"></div>

<!-- paint title bar icons -->
<svg class="a" style="left:0;top:58px" width="66" height="14" viewBox="0 0 66 14">
  <!-- app icon: palette + brush -->
  <path d="M1 8.500c0-2.500 2-4.300 4.300-4.300 2 0 3.200 1.200 3.200 2.800 0 1.700-1.300 1.500-2.200 1.700-.8.200-.5 1.500-1.700 1.800C2.800 11 1 10.300 1 8.500z" fill="#e9dcae" stroke="#a8976a" stroke-width="0.500"/>
  <circle cx="3" cy="7.500" r="0.700" fill="#d9534f"/><circle cx="5" cy="6" r="0.700" fill="#4a90d9"/><circle cx="6.800" cy="7" r="0.700" fill="#5cb85c"/>
  <path d="M5 10l4.500-7.500 1 .6L6 10.800z" fill="#9fb4c8" stroke="#6d8196" stroke-width="0.400"/>
  <rect x="13.200" y="3" width="0.600" height="8.500" fill="#aab4c0"/>
  <!-- save -->
  <rect x="19" y="3.800" width="8" height="7.600" rx="0.600" fill="#6a5aa8"/><rect x="20.600" y="3.800" width="4.800" height="3" fill="#e9e6f5"/><rect x="21" y="8.300" width="4" height="3.100" fill="#c9c2e6"/>
  <!-- undo -->
  <path d="M32.300 5.200l2.200-1.600v1.300c2.600 0 3.800 1.600 3.800 3.300 0 1.500-.9 2.700-2.200 3.300 .7-.9 1-1.700.9-2.500-.2-1.200-1.200-1.800-2.500-1.800v1.500z" fill="#2f8fd8" stroke="#1c6fb5" stroke-width="0.300"/>
  <!-- redo (disabled) -->
  <path d="M49.700 5.200l-2.200-1.600v1.300c-2.600 0-3.800 1.600-3.800 3.300 0 1.500.9 2.700 2.200 3.300-.7-.9-1-1.700-.9-2.500.2-1.200 1.200-1.800 2.500-1.800v1.500z" fill="#b9c6d6"/>
  <!-- customize arrow -->
  <rect x="54.500" y="6.300" width="4" height="0.700" fill="#222"/><path d="M54.500 8h4l-2 2.200z" fill="#222"/>
  <rect x="63.200" y="3" width="0.600" height="8.500" fill="#aab4c0"/>
</svg>
<div class="a" style="left:597px;top:58px;width:7px;height:14px;background:rgba(226,186,60,0.550);filter:blur(1.200px)"></div>
<!-- paint window buttons -->
<div class="a" style="left:546.500px;top:57px;width:54px;height:10.500px;box-sizing:border-box;border:0.700px solid #8a939e;border-top:none;border-radius:0 0 2.500px 2.500px;background:linear-gradient(180deg,rgba(255,255,255,0.920),rgba(236,240,244,0.850));"></div>
<div class="a" style="left:561.700px;top:57px;width:0.700px;height:10px;background:#9aa3ad"></div>
<div class="a" style="left:575.800px;top:57px;width:0.700px;height:10px;background:#9aa3ad"></div>
<div class="a" style="left:572px;top:59.500px;width:16px;height:13px;border-radius:40%;background:rgba(125,175,220,0.620);filter:blur(1.800px)"></div>
<div class="a" style="left:551.500px;top:62.700px;width:6px;height:1.400px;box-sizing:border-box;border:0.500px solid #555;background:#fff"></div>
<svg class="a" style="left:565px;top:58.500px" width="8" height="7" viewBox="0 0 8 7"><path d="M0.800 0.800v4.800h6.200V0.800M2.300 1.800h3.200v2.500H2.300z" fill="none" stroke="#4a4f57" stroke-width="0.800"/></svg>
<svg class="a" style="left:585px;top:59px" width="7" height="6" viewBox="0 0 7 6"><path d="M1 0.800l5 4.400M6 0.800l-5 4.400" fill="none" stroke="#6a7078" stroke-width="1.100"/></svg>
<!-- ribbon tabs -->
<div class="a" style="left:1px;top:74px;width:30px;height:11.300px;border-radius:1.500px 1.500px 0 0;background:linear-gradient(180deg,#3a6fc0 0%,#1f4f9e 48%,#123d86 52%,#1a4a98 100%);border:0.500px solid #0e3270;box-sizing:border-box"></div>
<div class="a" style="left:9px;top:77px;width:8px;height:5.500px;background:#fff;border-radius:0.500px"></div>
<div class="a" style="left:10px;top:78.200px;width:3px;height:3.200px;background:#2a5aa8"></div>
<svg class="a" style="left:19.500px;top:78.500px" width="5" height="3"><path d="M0.300 0.300h4l-2 2.200z" fill="#fff"/></svg>
<div class="a" style="left:32.500px;top:73.800px;width:27.500px;height:12.200px;background:linear-gradient(180deg,#fbfdff,#eef3fa);border:0.600px solid #b3c2d6;border-bottom:none;border-radius:1.500px 1.500px 0 0;box-sizing:border-box"></div>
<div class="t" style="left:38.800px;top:80.200px;font-size:6.100px;color:#1e2a3a">Home</div>
<div class="t" style="left:69.800px;top:80.200px;font-size:6.100px;color:#2a3646">View</div>
<div class="a" style="left:590.500px;top:75px;width:8px;height:8px;border-radius:50%;background:radial-gradient(circle at 35% 30%,#7db4f0,#2a62c8 60%,#1a46a0)"></div>
<div class="t b" style="left:592.700px;top:79.200px;font-size:6px;color:#fff">?</div>
<!-- ribbon: clipboard -->
<div class="a" style="left:9.300px;top:91.300px;width:12.600px;height:14.300px;box-sizing:border-box;border:1.200px solid #a98652;border-radius:1px;background:linear-gradient(160deg,#f4f7fb,#c9d4e3)"></div>
<div class="a" style="left:12.800px;top:90px;width:5.600px;height:2.600px;background:#8a94a3;border-radius:0.800px"></div>
<div class="t rl" style="left:8.300px;top:112.300px">Paste</div>
<svg class="a" style="left:13.500px;top:117.500px" width="4" height="3"><path d="M0.300 0.300h3l-1.500 1.700z" fill="#333"/></svg>
<svg class="a" style="left:29.500px;top:90.500px" width="7" height="8" viewBox="0 0 7 8"><path d="M1.500 0.500l3.200 5M5 0.500L1.800 5.500" stroke="#a9b5c6" stroke-width="0.800" fill="none"/><circle cx="1.600" cy="6.300" r="1" fill="none" stroke="#a9b5c6" stroke-width="0.700"/><circle cx="5" cy="6.300" r="1" fill="none" stroke="#a9b5c6" stroke-width="0.700"/></svg>
<div class="t rd" style="left:39px;top:94.200px">Cut</div>
<svg class="a" style="left:28.800px;top:102px" width="8" height="8" viewBox="0 0 8 8"><rect x="0.500" y="0.500" width="4" height="5" fill="#eef2f8" stroke="#a9b5c6" stroke-width="0.700"/><rect x="3" y="2.300" width="4.200" height="5.200" fill="#eef2f8" stroke="#a9b5c6" stroke-width="0.700"/></svg>
<div class="t rd" style="left:39px;top:106.400px">Copy</div>
<div class="t rg" style="left:16.300px;top:128.500px">Clipboard</div>
<div class="rsep" style="left:57.500px"></div>
<!-- ribbon: image -->
<div class="a" style="left:63.400px;top:92.200px;width:16.300px;height:12.300px;box-sizing:border-box;border:0.800px dashed #5b6f8c;background:rgba(255,255,255,0.350)"></div>
<div class="t rl" style="left:63.200px;top:112.300px">Select</div>
<svg class="a" style="left:69.700px;top:117.500px" width="4" height="3"><path d="M0.300 0.300h3l-1.500 1.700z" fill="#333"/></svg>
<svg class="a" style="left:85.500px;top:90.500px" width="7" height="7" viewBox="0 0 7 7"><path d="M1.500 0.300v5h5M0.300 1.500h5v5" fill="none" stroke="#a9b5c6" stroke-width="0.800"/></svg>
<div class="t rd" style="left:95px;top:94.200px">Crop</div>
<svg class="a" style="left:84.800px;top:101.800px" width="8" height="8" viewBox="0 0 8 8"><rect x="0.500" y="3.500" width="4" height="4" fill="#fff" stroke="#3d5a8a" stroke-width="0.700"/><path d="M2.500 2.800V0.500h5v5H5.300" fill="none" stroke="#3d5a8a" stroke-width="0.700"/></svg>
<div class="t rl" style="left:95px;top:106px">Resize</div>
<svg class="a" style="left:85.500px;top:113.500px" width="8" height="8" viewBox="0 0 8 8"><path d="M0.500 7.300h4.300L0.500 3z" fill="#dfe8f5" stroke="#3d5a8a" stroke-width="0.600"/><path d="M5.600 7.300h1.800L5.600 2.500z" fill="#7fa6d9" stroke="#3d5a8a" stroke-width="0.500"/><path d="M2 1.800c1.500-1.300 3.200-1 4 0" fill="none" stroke="#3d8ad0" stroke-width="0.700"/></svg>
<div class="t rl" style="left:95px;top:117.300px">Rotate</div>
<svg class="a" style="left:114.500px;top:116.500px" width="4" height="3"><path d="M0.300 0.300h3l-1.500 1.700z" fill="#333"/></svg>
<div class="t rg" style="left:81.800px;top:128.500px">Image</div>
<div class="rsep" style="left:122.200px"></div>
<!-- ribbon: tools -->
<div class="a" style="left:125.700px;top:91.800px;width:36.400px;height:27.600px;box-sizing:border-box;border:0.600px solid #c3cedd;background:#eef3fa"></div>
<div class="a" style="left:150px;top:92px;width:12px;height:12.500px;box-sizing:border-box;background:linear-gradient(180deg,#f9c35c,#f3a93a);border:0.600px solid #d9932a"></div>
<div class="t b" style="left:152.300px;top:98.300px;font-size:9.500px;color:#111;font-family:'Liberation Serif',serif">A</div>
<svg class="a" style="left:126px;top:92px" width="36" height="27" viewBox="0 0 36 27">
  <!-- pencil -->
  <path d="M2.300 9.800l1-2.600 5.500-5.300 1.600 1.600-5.500 5.300z" fill="#e8c552" stroke="#8a7a3a" stroke-width="0.400"/><path d="M8.800 1.900l1.600 1.600-1 1-1.600-1.600z" fill="#5b8ed0"/><path d="M2.300 9.800l1-2.600 1.600 1.600z" fill="#f3dfc0"/>
  <!-- fill bucket -->
  <path d="M16 4.500l4-2.800 3.500 4.200-4 3.300z" fill="#dfe9f5" stroke="#3f74b8" stroke-width="0.700"/><path d="M15.800 4.800c-1.800.8-2.300 2.800-1.800 4.600.9-1 1.600-2.300 1.800-4.600z" fill="#e0523a"/><path d="M17 2.500c.5-1.500 2.500-1.800 3 0" fill="none" stroke="#e0523a" stroke-width="0.700"/>
  <!-- eraser -->
  <path d="M2 21.500l5.500-5.200 3 2.500-4.500 5.200h-2.500z" fill="#f0857a" stroke="#c25a50" stroke-width="0.400"/><path d="M2 21.500l1.500 2.500h2.500l-2.500-3.800z" fill="#f6c0b8"/>
  <!-- color picker -->
  <path d="M14.500 24.500l1-2.500 4.500-4.500 1.500 1.500-4.500 4.500z" fill="#c9d9ee" stroke="#7f9ac0" stroke-width="0.400"/><path d="M19.500 17l2-2.200c.8-.8 2.200.6 1.400 1.400l-2 2.200z" fill="#2f6fc2"/>
  <!-- magnifier -->
  <circle cx="29" cy="18.500" r="3" fill="#f3f7fc" stroke="#8e9aac" stroke-width="0.900"/><path d="M31.200 20.800l3 3.300" stroke="#7a6a6a" stroke-width="1.300" stroke-linecap="round"/>
</svg>
<div class="t rg" style="left:136.500px;top:128.500px">Tools</div>
<!-- ribbon: brushes -->
<div class="a" style="left:171.800px;top:89.500px;width:17.200px;height:16.800px;background:linear-gradient(90deg,#fff 0%,#fff 68%,#d9c9bf 80%,#a9998f 100%);border:0.500px solid #c9d3e0;box-sizing:border-box"></div>
<svg class="a" style="left:171.800px;top:89.500px" width="18" height="17" viewBox="0 0 18 17"><path d="M2 8c1-3.500 4-5.800 7.500-5.500M3 11.500c2 2.300 5.500 2.500 7.500 .5M11 3.500c2.200 1 2.800 3.800 1.800 6" fill="none" stroke="#f07848" stroke-width="1.700" stroke-linecap="round" opacity="0.900"/><path d="M12 7l3.500-5.500 1.500 .8-2.500 6z" fill="#caa98a"/></svg>
<div class="t rl" style="left:169px;top:112.300px">Brushes</div>
<svg class="a" style="left:178.200px;top:117.500px" width="4" height="3"><path d="M0.300 0.300h3l-1.500 1.700z" fill="#333"/></svg>
<div class="rsep" style="left:195.300px"></div>
<!-- ribbon: shapes -->
<div class="a" style="left:199.200px;top:88.800px;width:83.500px;height:32px;box-sizing:border-box;border:0.600px solid #b9c6d8;background:#fff"></div>
<div class="a" style="left:275.700px;top:89.300px;width:6.500px;height:31px;background:linear-gradient(90deg,#f8fafd,#edf2f9);border-left:0.500px solid #dde4ee;box-sizing:border-box"></div>
<div class="a" style="left:275.700px;top:99.300px;width:6.500px;height:0.500px;background:#dde4ee"></div>
<div class="a" style="left:275.700px;top:110px;width:6.500px;height:0.500px;background:#dde4ee"></div>
<svg class="a" style="left:276.500px;top:89px" width="6" height="32" viewBox="0 0 6 32"><path d="M1 6.300h3l-1.500-1.700z" fill="#b0bac8"/><path d="M1 15.300h3l-1.500 1.700z" fill="#333"/><path d="M1 24.500h3M1 26h3l-1.500 1.700z" fill="#333" stroke="#333" stroke-width="0.500"/></svg>
<svg class="a" style="left:199px;top:88.500px" width="78" height="33" viewBox="0 0 78 33"><g fill="none" stroke="#3c6899" stroke-width="0.950" stroke-linejoin="round"><g transform="translate(5.3 6.5) scale(0.880)"><path d="M-4 -3.500L4 3.500"/></g><g transform="translate(16.0 6.5) scale(0.880)"><path d="M-4.500 3c1.500-4 2.500-5 3.500-2s2 1.500 5-4"/></g><g transform="translate(26.8 6.5) scale(0.880)"><ellipse cx="0" cy="0" rx="4.300" ry="3.300"/></g><g transform="translate(37.5 6.5) scale(0.880)"><rect x="-4.300" y="-3.300" width="8.600" height="6.600"/></g><g transform="translate(48.3 6.5) scale(0.880)"><rect x="-4.300" y="-3.300" width="8.600" height="6.600" rx="1.600"/></g><g transform="translate(59.0 6.5) scale(0.880)"><path d="M-4.500 3.300l3-6.600h3.500l-1.500 3.300 3.500 0 .5 3.300z"/></g><g transform="translate(69.8 6.5) scale(0.880)"><path d="M0 -3.600L4.300 3.400H-4.300z"/></g><g transform="translate(5.3 17.1) scale(0.880)"><path d="M-4 -3.600V3.400H4z"/></g><g transform="translate(16.0 17.1) scale(0.880)"><path d="M0 -4L4.300 0 0 4-4.300 0z"/></g><g transform="translate(26.8 17.1) scale(0.880)"><path d="M0 -4L4.300 -.8 2.700 3.700H-2.700L-4.300 -.8z"/></g><g transform="translate(37.5 17.1) scale(0.880)"><path d="M-2.200 -3.800h4.400L4.400 0 2.200 3.800h-4.400L-4.400 0z"/></g><g transform="translate(48.3 17.1) scale(0.880)"><path d="M-4.500 -1.800h4.500v-2L4.500 0 0 3.800v-2h-4.500z"/></g><g transform="translate(59.0 17.1) scale(0.880)"><path d="M4.500 -1.800H0v-2L-4.500 0 0 3.800v-2h4.500z"/></g><g transform="translate(69.8 17.1) scale(0.880)"><path d="M-1.800 4.200v-4.200h-2L0 -4.200 3.800 0h-2v4.200z"/></g><g transform="translate(5.3 27.5) scale(0.880)"><path d="M-1.800 -4.200v4.200h-2L0 4.200 3.800 0h-2v-4.200z"/></g><g transform="translate(16.0 27.5) scale(0.880)"><path d="M0 -4.200L1 -1 4.200 0 1 1 0 4.200-1 1-4.200 0-1 -1z"/></g><g transform="translate(26.8 27.5) scale(0.880)"><path d="M0 -4.200L1.200 -1.300 4.300 -1.300 1.800 .7 2.700 3.800 0 2 -2.700 3.800-1.800 .7-4.300 -1.300-1.200 -1.300z"/></g><g transform="translate(37.5 27.5) scale(0.880)"><path d="M0 -4.300L1.300 -2.200h2.500L2.500 0 3.800 2.200H1.300L0 4.300-1.300 2.200h-2.500L-2.500 0-3.800 -2.200h2.500z"/></g><g transform="translate(48.3 27.5) scale(0.880)"><path d="M-4.300 -3.300h8.600v5h-5l-2 2v-2h-1.600z"/></g><g transform="translate(59.0 27.5) scale(0.880)"><path d="M0 -3.300c2.500 0 4.400 1.200 4.400 2.800S2.500 2.300 0 2.300c-.5 0-1 0-1.400-.1L-3.300 3.800l.3-2.200C-3.900 1.100-4.400 .3-4.400 -.5-4.400 -2.100-2.500 -3.300 0 -3.300z"/></g><g transform="translate(69.8 27.5) scale(0.880)"><path d="M-2 -3c.8-1 2.500-1 3.300 0 1.500-.3 2.800 .8 2.500 2 .8 1 .3 2.500-1.200 2.700-.8 1-2.600 1-3.600 .2l-1.500 1.600 .1-1.900c-1.500-.4-2-1.900-1.200-2.800-.4-1.300 .5-2.200 1.600-1.800z"/></g></g></svg>
<svg class="a" style="left:286px;top:90px" width="9" height="9" viewBox="0 0 9 9"><path d="M1 8l.8-2.300L6.500 1l1.500 1.500L3.300 7.200z" fill="#dfe5ee" stroke="#a9b5c6" stroke-width="0.600"/></svg>
<div class="t rd" style="left:296.600px;top:94px">Outline</div>
<svg class="a" style="left:318.500px;top:92.800px" width="4" height="3"><path d="M0.300 0.300h3l-1.500 1.700z" fill="#a9b5c6"/></svg>
<svg class="a" style="left:286px;top:101.500px" width="9" height="9" viewBox="0 0 9 9"><path d="M1 8V5l3-3.500L7 5v3z" fill="#dfe5ee" stroke="#a9b5c6" stroke-width="0.600"/><path d="M0.500 8.300h8" stroke="#a9b5c6" stroke-width="0.800"/></svg>
<div class="t rd" style="left:296.600px;top:105.800px">Fill</div>
<svg class="a" style="left:305.500px;top:104.500px" width="4" height="3"><path d="M0.300 0.300h3l-1.500 1.700z" fill="#a9b5c6"/></svg>
<div class="t rg" style="left:251.500px;top:128.500px">Shapes</div>
<div class="rsep" style="left:326.500px"></div>
<!-- ribbon: size -->
<div class="a" style="left:332.300px;top:90.300px;width:16.800px;height:0.600px;background:#6f84a8"></div>
<div class="a" style="left:332.300px;top:92.600px;width:16.800px;height:1px;background:#6f84a8"></div>
<div class="a" style="left:332.300px;top:96.300px;width:16.800px;height:2.200px;background:#6f84a8"></div>
<div class="a" style="left:332.300px;top:100.800px;width:16.800px;height:3.200px;background:#6f84a8"></div>
<div class="t rd" style="left:335.300px;top:112.300px;color:#8f9bb0">Size</div>
<svg class="a" style="left:338.800px;top:117.500px" width="4" height="3"><path d="M0.300 0.300h3l-1.500 1.700z" fill="#9aa6b5"/></svg>
<div class="rsep" style="left:354px"></div>
<!-- ribbon: colors -->
<div class="a" style="left:358px;top:88.200px;width:22px;height:34.400px;box-sizing:border-box;border:0.700px solid #e3a63f;border-radius:1px;background:linear-gradient(180deg,#fbd17c,#f7c360 50%,#f9cb70)"></div>
<div class="a" style="left:361.800px;top:90.600px;width:14.800px;height:15px;background:#000;box-shadow:0 0 0 0.600px #8a6a2a"></div>
<div class="t rl" style="left:361.300px;top:112.300px">Color</div>
<div class="t rl" style="left:367.300px;top:119.200px">1</div>
<div class="a" style="left:385.200px;top:90.600px;width:12.600px;height:13.800px;box-sizing:border-box;border:0.700px solid #9aa6b8;background:#fff"></div>
<div class="t rl" style="left:384px;top:112.300px">Color</div>
<div class="t rl" style="left:389.800px;top:119.200px">2</div>
<div class="a" style="left:403.5px;top:89.4px;width:10.200px;height:8.8px;box-sizing:border-box;border:0.500px solid #c2c9d4;background:#000000"></div>
<div class="a" style="left:415.4px;top:89.4px;width:10.200px;height:8.8px;box-sizing:border-box;border:0.500px solid #c2c9d4;background:#7f7f7f"></div>
<div class="a" style="left:427.3px;top:89.4px;width:10.200px;height:8.8px;box-sizing:border-box;border:0.500px solid #c2c9d4;background:#880015"></div>
<div class="a" style="left:439.1px;top:89.4px;width:10.200px;height:8.8px;box-sizing:border-box;border:0.500px solid #c2c9d4;background:#ed1c24"></div>
<div class="a" style="left:451.0px;top:89.4px;width:10.200px;height:8.8px;box-sizing:border-box;border:0.500px solid #c2c9d4;background:#ff7f27"></div>
<div class="a" style="left:462.9px;top:89.4px;width:10.200px;height:8.8px;box-sizing:border-box;border:0.500px solid #c2c9d4;background:#fff200"></div>
<div class="a" style="left:474.8px;top:89.4px;width:10.200px;height:8.8px;box-sizing:border-box;border:0.500px solid #c2c9d4;background:#22b14c"></div>
<div class="a" style="left:486.7px;top:89.4px;width:10.200px;height:8.8px;box-sizing:border-box;border:0.500px solid #c2c9d4;background:#00a2e8"></div>
<div class="a" style="left:498.5px;top:89.4px;width:10.200px;height:8.8px;box-sizing:border-box;border:0.500px solid #c2c9d4;background:#3f48cc"></div>
<div class="a" style="left:510.4px;top:89.4px;width:10.200px;height:8.8px;box-sizing:border-box;border:0.500px solid #c2c9d4;background:#a349a4"></div>
<div class="a" style="left:403.5px;top:100.6px;width:10.200px;height:9.6px;box-sizing:border-box;border:0.500px solid #c2c9d4;background:#ffffff"></div>
<div class="a" style="left:415.4px;top:100.6px;width:10.200px;height:9.6px;box-sizing:border-box;border:0.500px solid #c2c9d4;background:#c3c3c3"></div>
<div class="a" style="left:427.3px;top:100.6px;width:10.200px;height:9.6px;box-sizing:border-box;border:0.500px solid #c2c9d4;background:#b97a57"></div>
<div class="a" style="left:439.1px;top:100.6px;width:10.200px;height:9.6px;box-sizing:border-box;border:0.500px solid #c2c9d4;background:#ffaec9"></div>
<div class="a" style="left:451.0px;top:100.6px;width:10.200px;height:9.6px;box-sizing:border-box;border:0.500px solid #c2c9d4;background:#ffc90e"></div>
<div class="a" style="left:462.9px;top:100.6px;width:10.200px;height:9.6px;box-sizing:border-box;border:0.500px solid #c2c9d4;background:#efe4b0"></div>
<div class="a" style="left:474.8px;top:100.6px;width:10.200px;height:9.6px;box-sizing:border-box;border:0.500px solid #c2c9d4;background:#b5e61d"></div>
<div class="a" style="left:486.7px;top:100.6px;width:10.200px;height:9.6px;box-sizing:border-box;border:0.500px solid #c2c9d4;background:#99d9ea"></div>
<div class="a" style="left:498.5px;top:100.6px;width:10.200px;height:9.6px;box-sizing:border-box;border:0.500px solid #c2c9d4;background:#7092be"></div>
<div class="a" style="left:510.4px;top:100.6px;width:10.200px;height:9.6px;box-sizing:border-box;border:0.500px solid #c2c9d4;background:#c8bfe7"></div>
<div class="a" style="left:403.5px;top:112.2px;width:10.200px;height:10.0px;box-sizing:border-box;border:0.500px solid #c2c9d4;background:#ffd0dc"></div>
<div class="a" style="left:415.4px;top:112.2px;width:10.200px;height:10.0px;box-sizing:border-box;border:0.500px solid #c2c9d4;background:#ff4f86"></div>
<div class="a" style="left:427.3px;top:112.2px;width:10.200px;height:10.0px;box-sizing:border-box;border:0.600px solid #b9c2d0;background:#e6ebf5"></div>
<div class="a" style="left:439.1px;top:112.2px;width:10.200px;height:10.0px;box-sizing:border-box;border:0.600px solid #b9c2d0;background:#e6ebf5"></div>
<div class="a" style="left:451.0px;top:112.2px;width:10.200px;height:10.0px;box-sizing:border-box;border:0.600px solid #b9c2d0;background:#e6ebf5"></div>
<div class="a" style="left:462.9px;top:112.2px;width:10.200px;height:10.0px;box-sizing:border-box;border:0.600px solid #b9c2d0;background:#e6ebf5"></div>
<div class="a" style="left:474.8px;top:112.2px;width:10.200px;height:10.0px;box-sizing:border-box;border:0.600px solid #b9c2d0;background:#e6ebf5"></div>
<div class="a" style="left:486.7px;top:112.2px;width:10.200px;height:10.0px;box-sizing:border-box;border:0.600px solid #b9c2d0;background:#e6ebf5"></div>
<div class="a" style="left:498.5px;top:112.2px;width:10.200px;height:10.0px;box-sizing:border-box;border:0.600px solid #b9c2d0;background:#e6ebf5"></div>
<div class="a" style="left:510.4px;top:112.2px;width:10.200px;height:10.0px;box-sizing:border-box;border:0.600px solid #b9c2d0;background:#e6ebf5"></div>
<div class="a" style="left:523px;top:90px;width:15.800px;height:15.500px;box-sizing:border-box;border:0.500px solid #8a93a5;background:linear-gradient(180deg,rgba(255,255,255,0) 0%,rgba(120,120,120,0.550) 100%),linear-gradient(90deg,#e8382f 0%,#f0d02a 18%,#3fc04a 38%,#2fb8d8 55%,#3f4fd0 72%,#b03fc0 88%,#e0306a 100%)"></div>
<div class="t rl" style="left:525.800px;top:112.300px">Edit</div>
<div class="t rl" style="left:522.800px;top:119.200px">colors</div>
<div class="t rg" style="left:441.800px;top:128.500px">Colors</div>
<div class="rsep" style="left:545.300px"></div>
<!-- paint scrollbars -->
<div class="a" style="left:592px;top:137.500px;width:8.600px;height:388.500px;background:linear-gradient(90deg,#e9e9e9,#f4f4f4 40%,#f0f0f0)"></div>
<div class="a" style="left:592.300px;top:144.500px;width:8px;height:316.300px;box-sizing:border-box;border:0.600px solid #b3b3b3;border-radius:1px;background:linear-gradient(90deg,#d9d9d9 0%,#ececec 25%,#e0e0e0 50%,#cfcfcf 60%,#c9c9c9 100%)"></div>
<svg class="a" style="left:593.800px;top:139.300px" width="5" height="4" viewBox="0 0 5 4"><path d="M0.500 3L2.500 0.800 4.500 3z" fill="#444"/></svg>
<svg class="a" style="left:593.800px;top:519.500px" width="5" height="4" viewBox="0 0 5 4"><path d="M0.500 0.800L2.500 3 4.500 0.800z" fill="#444"/></svg>
<div class="a" style="left:594.300px;top:301.500px;width:3px;height:0.900px;background:#555;box-shadow:0 2.400px 0 #555"></div>
<div class="a" style="left:4px;top:526px;width:588px;height:9.500px;background:linear-gradient(180deg,#e9e9e9,#f4f4f4 40%,#f0f0f0)"></div>
<div class="a" style="left:11.500px;top:526.300px;width:327px;height:8.800px;box-sizing:border-box;border:0.600px solid #adadad;border-radius:1px;background:linear-gradient(180deg,#dcdcdc 0%,#ececec 25%,#e0e0e0 50%,#cfcfcf 60%,#c9c9c9 100%)"></div>
<svg class="a" style="left:5px;top:528.300px" width="4" height="5" viewBox="0 0 4 5"><path d="M3.200 0.500L0.800 2.500 3.200 4.500z" fill="#333"/></svg>
<svg class="a" style="left:585.500px;top:528.300px" width="4" height="5" viewBox="0 0 4 5"><path d="M0.800 0.500L3.200 2.500 0.800 4.500z" fill="#333"/></svg>
<div class="a" style="left:172.500px;top:528.300px;width:0.600px;height:4.500px;background:#555;box-shadow:1.300px 0 0 #555,2.600px 0 0 #555"></div>
<div class="a" style="left:592px;top:526px;width:8.600px;height:9.500px;background:#ececec"></div>
<!-- status bar -->
<svg class="a" style="left:2.500px;top:538.500px" width="8" height="8" viewBox="0 0 8 8"><path d="M4 0.500v7M0.500 4h7" stroke="#555" stroke-width="0.600"/><path d="M4 0.300l.9 1.200H3.100zM4 7.700l.9-1.200H3.100zM0.300 4l1.200-.9v1.800zM7.700 4l-1.200-.9v1.800z" fill="#555"/></svg>
<div class="a" style="left:87.500px;top:539px;width:5.500px;height:5.500px;box-sizing:border-box;border:0.700px dashed #555"></div>
<div class="a" style="left:172px;top:539px;width:4.600px;height:4.600px;box-sizing:border-box;border:0.700px solid #444;box-shadow:1px 1px 0 #999"></div>
<div class="t st" style="left:179.800px;top:542.300px">1914 × 848px</div>
<div class="ssep" style="left:83.500px"></div>
<div class="ssep" style="left:166.500px"></div>
<div class="ssep" style="left:250.300px"></div>
<div class="ssep" style="left:333px"></div>
<div class="ssep" style="left:484.500px"></div>
<div class="t st" style="left:495.500px;top:542.500px;font-family:'Liberation Serif',serif;font-weight:bold;font-size:6.300px">100%</div>
<div class="a" style="left:514.500px;top:538.300px;width:8px;height:8px;box-sizing:border-box;border:0.700px solid #7d7d7d;border-radius:50%;background:linear-gradient(180deg,#fff,#dcdcdc)"></div>
<div class="a" style="left:516.500px;top:542px;width:4px;height:0.800px;background:#444"></div>
<div class="a" style="left:528px;top:542px;width:48px;height:0.700px;background:#cfcfcf"></div>
<div class="a" style="left:549.300px;top:537.500px;width:4px;height:9px;box-sizing:border-box;border:0.600px solid #8d8d8d;border-radius:0.500px 0.500px 2px 2px;background:linear-gradient(90deg,#fff,#d2d2d2)"></div>
<div class="a" style="left:579.500px;top:538.300px;width:8px;height:8px;box-sizing:border-box;border:0.700px solid #7d7d7d;border-radius:50%;background:linear-gradient(180deg,#fff,#dcdcdc)"></div>
<div class="a" style="left:581.500px;top:542px;width:4px;height:0.800px;background:#444"></div>
<div class="a" style="left:583.100px;top:540.400px;width:0.800px;height:4px;background:#444"></div>
<svg class="a" style="left:593px;top:541px" width="7" height="7" viewBox="0 0 7 7"><g fill="#b9b9b9"><rect x="5" y="0.500" width="1" height="1"/><rect x="3" y="2.500" width="1" height="1"/><rect x="5" y="2.500" width="1" height="1"/><rect x="1" y="4.500" width="1" height="1"/><rect x="3" y="4.500" width="1" height="1"/><rect x="5" y="4.500" width="1" height="1"/></g></svg>

<!-- canvas drawing -->
<svg class="a" style="left:0;top:0" width="604" height="540" viewBox="0 0 604 540"><defs><filter id="chk" x="-20%" y="-30%" width="140%" height="160%"><feGaussianBlur stdDeviation="0.700"/></filter></defs>
  <g fill="none" stroke="#000" stroke-width="1.450" stroke-linecap="round" stroke-linejoin="round">
    <!-- head -->
    <path d="M221 339.300C197 322.500 180.800 299 180.800 272A87 74.700 0 0 1 354.800 272C354.800 298 340 320 318.400 335" fill="#fff"/>
    <!-- legs -->
    <path d="M226 375L220.300 401.500M314 366L320.500 392.400"/>
    <!-- sprout -->
    <path d="M266.500 196.800C266.300 192.500 264.500 189.300 261.500 187.300" stroke-width="1.200"/>
    <path d="M261.300 187.800C256.500 193.300 245.500 194 240.800 189.300C243 181.800 255.500 180 261.300 187.800Z" fill="#a6d82c" stroke-width="1.200"/>
    <path d="M261.600 187C255 181 255.500 169 263.500 164.800C271.300 166 273 181 261.600 187Z" fill="#a6d82c" stroke-width="1.200"/>
    <!-- mouth -->
    <path d="M264.500 289.300C265.300 293.300 272.300 294 273.800 290.200C275.300 294 282.300 293.300 283.200 289" stroke-width="1.400"/>
  </g>
  <!-- eyes -->
  <ellipse cx="244.600" cy="287.300" rx="10.700" ry="10.500" fill="#000"/>
  <ellipse cx="301.300" cy="285.200" rx="10.200" ry="10.500" fill="#000"/>
  <!-- cheeks -->
  <ellipse cx="211" cy="298" rx="9.200" ry="5" fill="#ffc3d5" filter="url(#chk)"/>
  <ellipse cx="326.300" cy="291.700" rx="9.900" ry="5.200" fill="#ffc3d5" filter="url(#chk)"/>
  <!-- heart -->
  <path d="M277.500 326.500C272 313 261 309 251.500 311.500C241 314.500 235.500 324.500 238.500 336C242.500 352 262 368 278 377.500C294 368.500 313.500 353 317 337C320 324.500 313 314 303 311.800C293.500 309.800 283 314 277.500 326.500Z" fill="#fcd3e1" stroke="#f1b3c9" stroke-width="0.900"/>
  <!-- hands -->
  <g fill="#fff" stroke="#000" stroke-width="1.450" stroke-linecap="round" stroke-linejoin="round">
    <path d="M221 339.300C212.500 337.500 205.500 344.500 206 354C206.800 364.500 217.500 373.500 231 374.200C241.500 374.500 249.500 366.500 247.600 359.500C246 354.200 238 353.600 228.600 352"/>
    <path d="M318.400 335C323.300 340 325 350 321.500 357C317.500 364.300 305.500 367 298 363.300C292.500 360.300 291.800 354 296 350.500C300.500 347 308 346.800 314.500 344.200"/>
  </g>
  <text x="396.500" y="185.600" font-family="'Liberation Serif',serif" font-weight="bold" font-size="15.300" fill="#000">@Sủi</text>
</svg>

<!-- ================= TASKBAR ================= -->
<div class="a" id="taskbar"></div>

<!-- strip between paint window and taskbar -->
<div class="a" style="left:0;top:551.300px;width:604px;height:4px;background:linear-gradient(180deg,#eef0f2,#e3e5e8)"></div><div class="a" style="left:0;top:551.300px;width:330px;height:4px;background:linear-gradient(90deg,rgba(150,154,160,1) 0%,rgba(150,154,160,1) 85%,rgba(150,154,160,0) 100%);-webkit-mask-image:linear-gradient(180deg,rgba(0,0,0,0.300),#000);mask-image:linear-gradient(180deg,rgba(0,0,0,0.300),#000)"></div>
<div class="a" style="left:310px;top:549.500px;width:16px;height:6px;background:#1b1416;border-radius:2px 2px 0 0;filter:blur(0.600px)"></div>
<div class="t b" style="left:333px;top:554.300px;font-size:5px;color:#111;letter-spacing:0.150px">Nhạc Hoạ · Lớp 7 · 10 điểm · 7 phút trước</div>
<div class="a" style="left:65.0px;top:555.500px;width:31.0px;height:21px;box-sizing:border-box;border:0.700px solid #6d737b;border-bottom:none;border-radius:1.500px 1.500px 0 0;background:linear-gradient(180deg,#5b6068 0%,#3a3f46 45%,#1f2328 55%,#23272c 100%)"></div><div class="a" style="left:131.0px;top:555.500px;width:31.0px;height:21px;box-sizing:border-box;border:0.700px solid #6d737b;border-bottom:none;border-radius:1.500px 1.500px 0 0;background:linear-gradient(180deg,#5b6068 0%,#3a3f46 45%,#1f2328 55%,#23272c 100%)"></div><div class="a" style="left:296.3px;top:555.500px;width:31.7px;height:21px;box-sizing:border-box;border:0.700px solid #6d737b;border-bottom:none;border-radius:1.500px 1.500px 0 0;background:linear-gradient(180deg,#5b6068 0%,#3a3f46 45%,#1f2328 55%,#23272c 100%)"></div><div class="a" style="left:329.8px;top:555.500px;width:31.2px;height:21px;box-sizing:border-box;border:0.700px solid #6d737b;border-bottom:none;border-radius:1.500px 1.500px 0 0;background:linear-gradient(180deg,#5b6068 0%,#3a3f46 45%,#1f2328 55%,#23272c 100%)"></div><!-- start orb -->
<div class="a" style="left:4.200px;top:556px;width:20px;height:20px;border-radius:50%;background:radial-gradient(circle at 50% 28%,#9fd3f5 0%,#3f8fd0 38%,#1a5aa0 70%,#0f3a70 100%);box-shadow:0 0 1.500px #6fb0e0"></div>
<svg class="a" style="left:8px;top:559.500px" width="13" height="13" viewBox="0 0 13 13"><path d="M1.500 2.300c1.500-.8 3-.6 4.300 0l-.9 3.500c-1.300-.6-2.800-.8-4.300 0z" fill="#f0622a"/><path d="M6.700 2.600c1.300.6 2.800.8 4.300 0l-.9 3.500c-1.500.8-3 .6-4.300 0z" fill="#8fc43a"/><path d="M0.400 6.700c1.500-.8 3-.6 4.300 0l-.9 3.500c-1.300-.6-2.800-.8-4.300 0z" fill="#3fa3e8"/><path d="M5.600 7c1.300.6 2.800.8 4.300 0L9 10.500c-1.500.8-3 .6-4.300 0z" fill="#f7c52a"/></svg>
<!-- IE -->
<div class="t b" style="left:40.300px;top:561px;font-size:26px;color:#4fc8ee;transform:translateY(-41%) scaleX(1.220);transform-origin:0 50%;left:39.300px;font-family:'Liberation Sans',sans-serif">e</div>
<svg class="a" style="left:36px;top:555px" width="24" height="22" viewBox="0 0 24 22"><path d="M3.500 18.500C1.500 14 8 4.500 18.500 2.800" fill="none" stroke="#f3c71e" stroke-width="1.300"/><path d="M18.500 2.800c2 .2 2.500 2 1.200 4.200" fill="none" stroke="#f3c71e" stroke-width="1.100"/></svg>
<!-- Opera -->
<div class="a" style="left:72.200px;top:556.500px;width:16.600px;height:18px;border-radius:50%;background:radial-gradient(circle at 50% 30%,#ff3348,#d8122a 65%,#a50c1e)"></div>
<div class="a" style="left:76px;top:559.300px;width:9px;height:12.400px;border-radius:50%;background:#2a2e34"></div>
<!-- media player -->
<div class="a" style="left:105.500px;top:559px;width:15px;height:14px;background:linear-gradient(135deg,#7fb8ea,#3f82cc);border-radius:1px"></div>
<div class="a" style="left:108px;top:560.800px;width:10.400px;height:10.400px;border-radius:50%;background:radial-gradient(circle at 40% 35%,#ffb05a,#f07a1a)"></div>
<svg class="a" style="left:111px;top:563px" width="6" height="6" viewBox="0 0 6 6"><path d="M0.800 0.500L5.200 3 0.800 5.500z" fill="#fff"/></svg>
<!-- explorer -->
<div class="a" style="left:138px;top:559px;width:17.500px;height:11px;background:linear-gradient(180deg,#f7e08a,#ecc452);border-radius:1px"></div>
<div class="a" style="left:140px;top:557.500px;width:6px;height:3px;background:#e9c85a;border-radius:1px 1px 0 0"></div>
<div class="a" style="left:141px;top:566px;width:12px;height:7px;background:linear-gradient(180deg,#9fd0ef,#5fa3d8);border-radius:1px"></div>
<div class="a" style="left:143.500px;top:569.500px;width:7px;height:1.400px;background:#e9f3fb"></div>
<!-- firefox -->
<div class="a" style="left:171.300px;top:556.800px;width:17.200px;height:17.200px;border-radius:50%;background:radial-gradient(circle at 45% 55%,#7a3fd0 0%,#8a3fc8 24%,#ff5a2a 46%,#ff8a1e 70%,#ffc83a 100%)"></div>
<svg class="a" style="left:170px;top:554.500px" width="20" height="12" viewBox="0 0 20 12"><path d="M11 1c1.800 1 3.200 2.500 3.500 4.500 1 .3 2.500 1.500 3 3.500-1.500-1.500-4-2-6.500-1.300C9.500 6 9.800 3 11 1z" fill="#ffc21e"/></svg>
<!-- coc coc -->
<div class="a" style="left:203.700px;top:556.800px;width:17.400px;height:17.400px;border-radius:50%;background:radial-gradient(circle at 45% 50%,#8fd060,#5fae3a 80%)"></div>
<div class="a" style="left:208px;top:561.300px;width:8px;height:8px;box-sizing:border-box;border:1.600px solid #f2f8ec;border-radius:50%"></div>
<svg class="a" style="left:212px;top:556px" width="10" height="10" viewBox="0 0 10 10"><path d="M1.500 6.500L7.500 0.800M3 7.500l6-3.500M2.300 5l3.200-4.500" stroke="#f2f8ec" stroke-width="1.100" fill="none"/></svg>
<!-- word -->
<div class="a" style="left:238px;top:557px;width:14.800px;height:15px;background:linear-gradient(180deg,#fff,#e6ecf5);border-radius:0.800px"></div>
<div class="t b" style="left:238.600px;top:563.800px;font-size:10.500px;color:#1f5fc0">W</div>
<!-- chrome -->
<div class="a" style="left:270.700px;top:557px;width:16.600px;height:16.600px;border-radius:50%;background:conic-gradient(from -60deg,#ea4335 0deg,#ea4335 120deg,#fbbc05 120deg,#fbbc05 240deg,#34a853 240deg,#34a853 360deg)"></div>
<div class="a" style="left:275px;top:561.300px;width:8px;height:8px;border-radius:50%;background:#fff"></div>
<div class="a" style="left:276.200px;top:562.500px;width:5.600px;height:5.600px;border-radius:50%;background:#4a8af0"></div>
<!-- paint -->
<svg class="a" style="left:302px;top:556.500px" width="21" height="19" viewBox="0 0 21 19"><path d="M2 11.500C2 7 6 4 10.500 4c4 0 6.500 2 6.500 5 0 3-2.500 2.800-4.300 3.200-1.500.4-1 2.500-3.200 3.200C6 16.300 2 15 2 11.500z" fill="#e9eff6" stroke="#c9d3de" stroke-width="0.600"/><circle cx="5.300" cy="10" r="1.400" fill="#e0503a"/><circle cx="8.500" cy="7.300" r="1.400" fill="#3f9be0"/><circle cx="12.500" cy="7.300" r="1.300" fill="#5fb84a"/><circle cx="8.800" cy="11.300" r="1.700" fill="#2a5a8a"/><path d="M9.500 16l6-12 1.800.8-5.500 12z" fill="#e8b95a"/><path d="M15.500 4l1-2.500 1.800.8-1 2.500z" fill="#caa06a"/></svg>
<!-- recorder -->
<div class="a" style="left:337px;top:557.300px;width:16px;height:16px;box-sizing:border-box;border:1.300px solid #f4f4f4;border-radius:50%;background:#0a0a0a"></div>
<div class="a" style="left:340.300px;top:560.600px;width:9.400px;height:9.400px;border-radius:50%;background:radial-gradient(circle at 45% 40%,#ff3a35,#d9141a)"></div>
<!-- tray -->
<div class="t" style="left:919.500px;top:566px;font-size:5.400px;color:#d9d9d9;letter-spacing:0.300px">EN</div>
<div class="a" style="left:931.500px;top:562px;width:8.200px;height:8.200px;border-radius:50%;background:radial-gradient(circle at 40% 35%,#6a8af5,#1f2fc0 70%);box-shadow:0 0 0 0.500px #c9d0f0"></div>
<div class="t b" style="left:934px;top:566.300px;font-size:6.200px;color:#fff">?</div>
<svg class="a" style="left:943.500px;top:559.500px" width="7" height="10" viewBox="0 0 7 10"><path d="M1.500 3.500V1.500h3.500M2.500 1l2-.5M1.500 5.500v1" stroke="#e6e6e6" stroke-width="0.800" fill="none"/><rect x="2.300" y="7" width="1.500" height="1.500" fill="#e6e6e6"/></svg>
<svg class="a" style="left:954px;top:563.500px" width="6" height="4" viewBox="0 0 6 4"><path d="M0.500 3.500L3 0.800 5.500 3.500z" fill="#e6e6e6"/></svg>
<svg class="a" style="left:965px;top:561.500px" width="11" height="9" viewBox="0 0 11 9"><g fill="#e9e9e9"><rect x="0.500" y="6.500" width="1.500" height="2"/><rect x="2.800" y="5" width="1.500" height="3.500"/><rect x="5.100" y="3.300" width="1.500" height="5.200"/><rect x="7.400" y="1" width="1.600" height="7.500"/></g></svg>
<div class="t" style="left:986px;top:561.500px;font-size:6.300px;color:#f2f2f2;letter-spacing:-0.100px">9:52 PM</div>
<div class="t" style="left:983.300px;top:570.300px;font-size:6.300px;color:#f2f2f2;letter-spacing:-0.100px">3/11/2021</div>
<div class="a" style="left:1016.500px;top:555.500px;width:7.500px;height:21px;box-sizing:border-box;border-left:0.700px solid #4a4f57;background:linear-gradient(180deg,#2a2e34,#15181c)"></div>

</body>
</html>
